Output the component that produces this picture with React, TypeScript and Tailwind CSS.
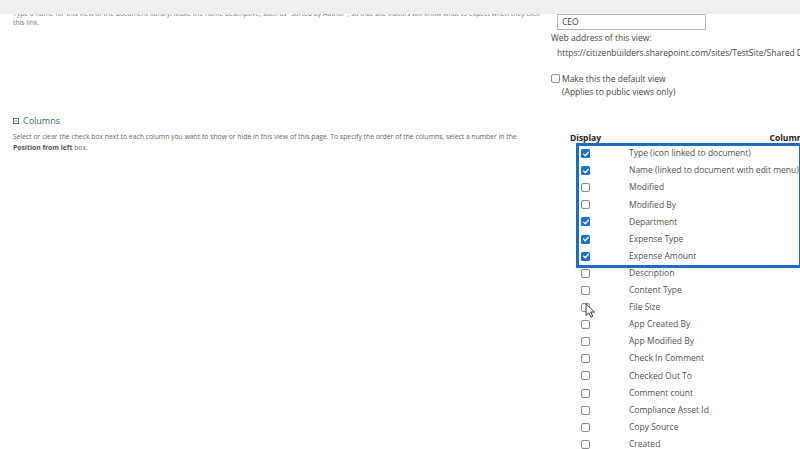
import React from 'react';

type Column = { name: string; checked: boolean };

const highlighted: Column[] = [
  { name: 'Type (icon linked to document)', checked: true },
  { name: 'Name (linked to document with edit menu)', checked: true },
  { name: 'Modified', checked: false },
  { name: 'Modified By', checked: false },
  { name: 'Department', checked: true },
  { name: 'Expense Type', checked: true },
  { name: 'Expense Amount', checked: true },
];

const others: Column[] = [
  'Description',
  'Content Type',
  'File Size',
  'App Created By',
  'App Modified By',
  'Check In Comment',
  'Checked Out To',
  'Comment count',
  'Compliance Asset Id',
  'Copy Source',
  'Created',
].map((name) => ({ name, checked: false }));

function Checkbox({ checked }: { checked: boolean }) {
  if (checked) {
    return (
      <span className="flex h-[9px] w-[9px] shrink-0 items-center justify-center rounded-[1.5px] bg-[#1d6fd1]">
        <svg viewBox="0 0 10 10" className="h-[8px] w-[8px]">
          <path d="M2 5.2l2 2 4-4.4" fill="none" stroke="white" strokeWidth={1.6} strokeLinecap="round" strokeLinejoin="round" />
        </svg>
      </span>
    );
  }
  return <span className="block h-[9px] w-[9px] shrink-0 rounded-[2px] border border-[#8a8a8a] bg-white" />;
}

function Row({ col, cursor }: { col: Column; cursor?: boolean }) {
  return (
    <div className="relative flex h-[17.12px] items-center">
      <div className="flex w-[59px] shrink-0 justify-start pl-[11px]">
        <Checkbox checked={col.checked} />
      </div>
      <span className="whitespace-nowrap text-[8.5px] text-[#505050]">{col.name}</span>
      {cursor && (
        <svg viewBox="0 0 12 18" className="absolute left-[15px] top-[4px] h-[16px] w-[11px]">
          <path d="M1 1v13l3.2-3 2.3 5 2-1-2.3-4.8H10.5z" fill="white" stroke="#222" strokeWidth={1} strokeLinejoin="round" />
        </svg>
      )}
    </div>
  );
}

export default function App() {
  return (
    <div
      className="relative h-[449px] w-[800px] overflow-hidden bg-white text-[#444]"
      style={{ fontFamily: '"Open Sans", "Noto Sans", Arial, sans-serif' }}
    >
      <div className="absolute left-0 top-0 z-10 h-[14px] w-full bg-[#efefef]" />

      <div className="flex">
        <div className="w-[551px] shrink-0 pl-[13px] pr-[6px] pt-[9px]">
          <p className="text-[6.8px] leading-[9px] text-[#777]">
            Type a name for this view of the document library. Make the name descriptive, such as "Sorted by Author", so that site visitors will know what to expect when they click this link.
          </p>
        </div>
        <div className="min-w-0 flex-1 overflow-hidden pt-[14px]">
          <div className="ml-[6px] flex h-[16px] w-[149px] items-center border border-[#b5b5b5] px-[4px] text-[8.5px] text-[#444]">
            CEO
          </div>
          <div className="mt-[1px] whitespace-nowrap text-[8.5px] leading-[13px]">Web address of this view:</div>
          <div className="ml-[6px] mt-[2px] whitespace-nowrap text-[8.5px] leading-[13px]">
            https://citizenbuilders.sharepoint.com/sites/TestSite/Shared Documents/Forms/CEO.aspx
          </div>
          <div className="mt-[13px] flex items-center gap-[2px] text-[8.5px] leading-[13px]">
            <Checkbox checked={false} />
            <span>Make this the default view</span>
          </div>
          <div className="ml-[11px] text-[8.5px] leading-[13px]">(Applies to public views only)</div>
        </div>
      </div>

      <div className="mt-[17px] flex">
        <div className="w-[560px] shrink-0 pl-[13px] pr-[20px]">
          <div className="flex items-center gap-[4px] text-[9px] leading-[12px] text-[#2f6b6b]">
            <svg viewBox="0 0 7 7" className="h-[6px] w-[6px]">
              <rect x="0.5" y="0.5" width="6" height="6" fill="none" stroke="#555" strokeWidth={1} />
              <path d="M2 3.5h3" stroke="#555" strokeWidth={1} />
            </svg>
            <span>Columns</span>
          </div>
          <p className="mt-[4px] text-[6.8px] leading-[11px] text-[#666]">
            Select or clear the check box next to each column you want to show or hide in this view of this page. To specify the order of the columns, select a number in the{' '}
            <b className="font-bold text-[#555]">Position from left</b> box.
          </p>
        </div>
        <div className="min-w-0 flex-1 pl-[10px] pt-[18px]">
          <div className="flex justify-between whitespace-nowrap text-[8.5px] font-bold leading-[10px] text-[#222]">
            <span>Display</span>
            <span className="-mr-[30px]">Column Name</span>
          </div>
          <div className="relative mt-[2px]">
            {highlighted.map((c) => (
              <Row key={c.name} col={c} />
            ))}
            <div className="pointer-events-none absolute -bottom-[3px] left-[6px] -right-[2px] -top-[2px] border-[3px] border-[#1b6dc1]" />
          </div>
          {others.map((c) => (
            <Row key={c.name} col={c} cursor={c.name === 'File Size'} />
          ))}
        </div>
      </div>
    </div>
  );
}
